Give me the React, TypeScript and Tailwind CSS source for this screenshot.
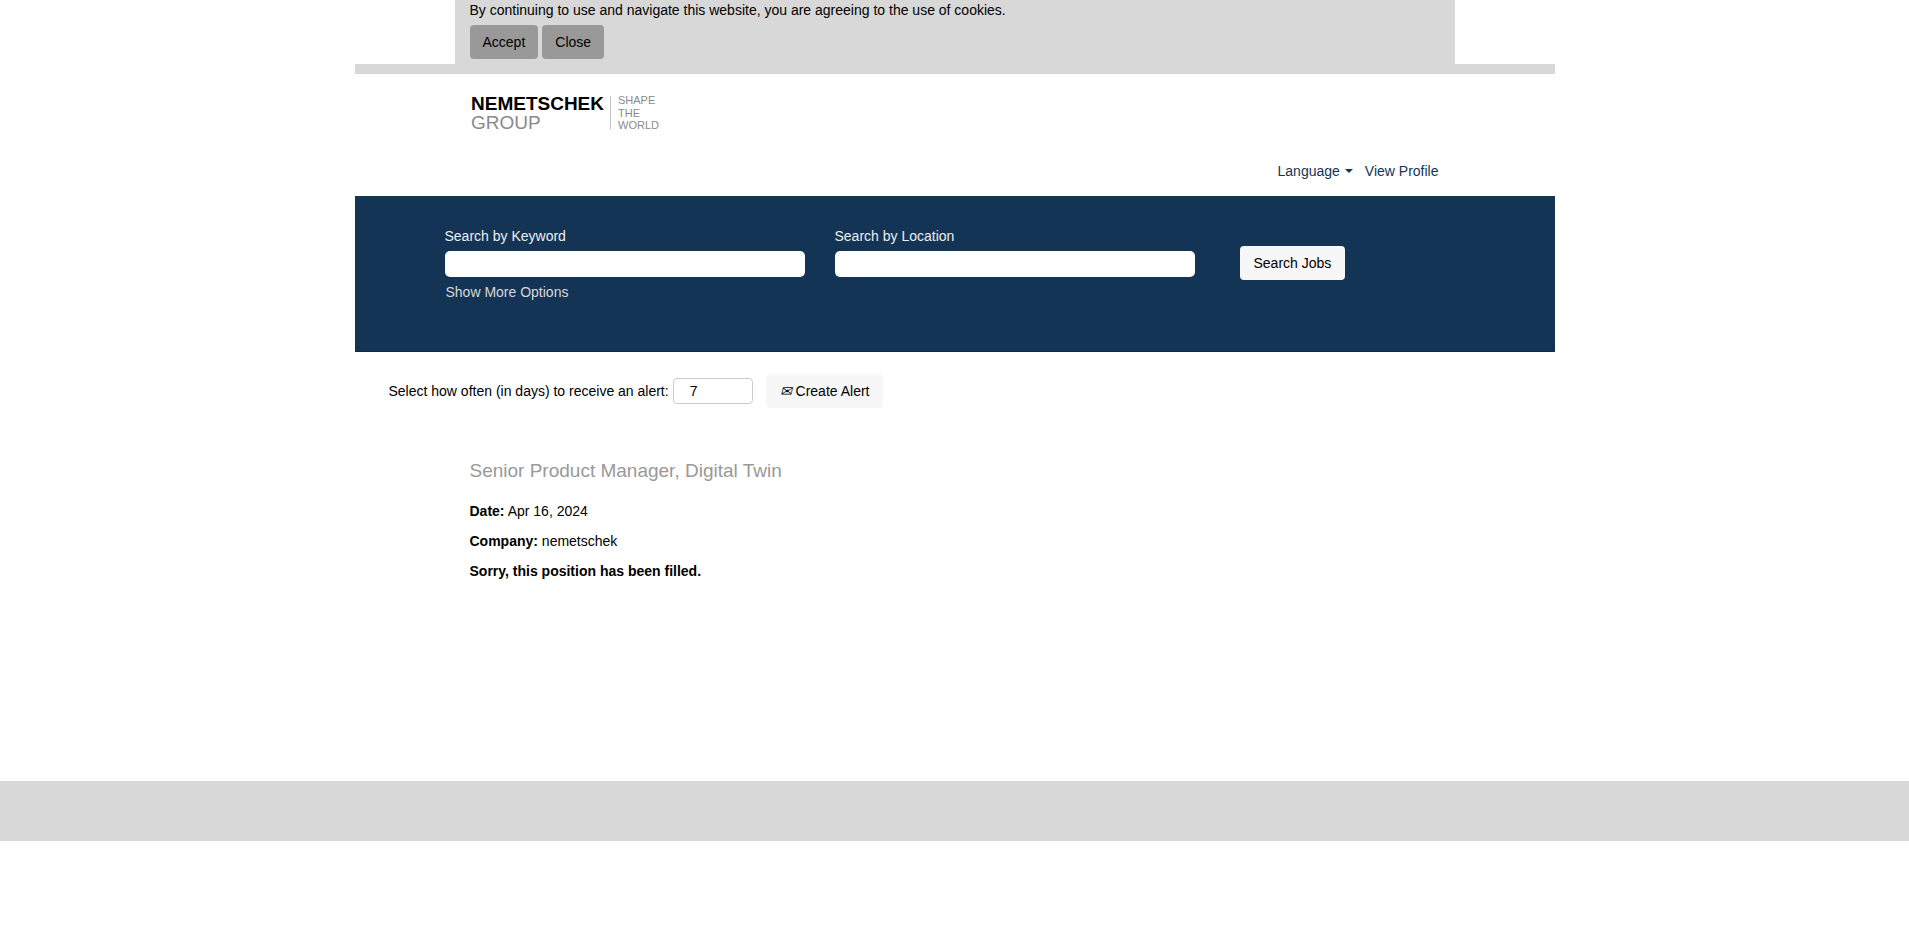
import React from "react";

function Logo() {
  return (
    <svg
      role="img"
      aria-label="Nemetschek Group, Shape the World"
      width="190"
      height="40"
      viewBox="0 0 190 40"
      fontFamily='"Liberation Sans", Arial, sans-serif'
    >
      <text x="0" y="18" fontSize="19" fontWeight="700" fill="#000000">NEMETSCHEK</text>
      <text x="0" y="37" fontSize="19" fill="#8a8a8a">GROUP</text>
      <rect x="139" y="4" width="1" height="33" fill="#c4c4c4" />
      <g fontSize="11" fill="#8a8a8a">
        <text x="147" y="12">SHAPE</text>
        <text x="147" y="25">THE</text>
        <text x="147" y="37">WORLD</text>
      </g>
    </svg>
  );
}

function CookieBanner() {
  return (
    <section aria-label="Cookie notice" className="mx-auto h-16 max-w-[1000px] bg-[#d8d8d8] px-[15px]">
      <p className="mb-[5px]">
        By continuing to use and navigate this website, you are agreeing to the use of cookies.
      </p>
      <div className="flex gap-1">
        <button type="button" className="h-[34px] rounded bg-[#999999] px-[13px]">Accept</button>
        <button type="button" className="h-[34px] rounded bg-[#999999] px-[13px]">Close</button>
      </div>
    </section>
  );
}

function Header() {
  return (
    <header className="border-t-10 border-[#d8d8d8]">
      <div className="mx-auto flex h-[122px] max-w-[1000px] flex-col justify-between px-4 pt-[18px] pb-[15px]">
        <a href="#" className="self-start"><Logo /></a>
        <nav className="flex justify-end gap-3 text-[#133454]">
          <a href="#" className="flex items-center gap-[5px]">
            Language
            <svg width="8" height="4" viewBox="0 0 8 4" fill="currentColor" aria-hidden="true">
              <path d="M0 0h8L4 4z" />
            </svg>
          </a>
          <a href="#">View Profile</a>
        </nav>
      </div>
    </header>
  );
}

function SearchField({ id, label }: { id: string; label: string }) {
  return (
    <div className="w-[360px]">
      <label htmlFor={id} className="mb-[5px] block text-[#eeeeee]">{label}</label>
      <input id={id} type="text" className="block h-[26px] w-full rounded-[5px] bg-white px-4 text-black" />
    </div>
  );
}

function SearchBar() {
  return (
    <form className="h-[156px] border-b border-[#0e2a45] bg-[#133454] pt-[30px] pl-[90px]">
      <div className="flex">
        <div className="flex gap-[30px]">
          <SearchField id="keyword" label="Search by Keyword" />
          <SearchField id="location" label="Search by Location" />
        </div>
        <button type="button" className="mt-5 ml-[45px] h-[34px] rounded bg-[#f7f7f7] px-[14px] text-black">
          Search Jobs
        </button>
      </div>
      <a href="#" className="mt-[2px] ml-px inline-block text-[#d8d8d8]">Show More Options</a>
    </form>
  );
}

function AlertForm() {
  return (
    <form className="mt-[22px] ml-[34px] flex h-[34px] items-center">
      <label htmlFor="frequency" className="mr-1">Select how often (in days) to receive an alert:</label>
      <input
        id="frequency"
        type="text"
        defaultValue="7"
        className="mr-[13px] h-[26px] w-20 rounded border border-[#cccccc] bg-white px-4"
      />
      <button type="button" className="h-[34px] rounded bg-[#f7f7f7] px-[14px]">
        <span className="italic" aria-hidden="true">✉</span> Create Alert
      </button>
    </form>
  );
}

function JobDetails() {
  return (
    <main className="mx-auto max-w-[1000px] px-[15px] pt-[50px] pb-[200px]">
      <h1 className="mb-[17px] text-[19px] leading-[26px] text-[#999999]">Senior Product Manager, Digital Twin</h1>
      <div className="flex flex-col gap-[10px]">
        <p><strong>Date:</strong> Apr 16, 2024</p>
        <p><strong>Company:</strong> nemetschek</p>
        <p><strong>Sorry, this position has been filled.</strong></p>
      </div>
    </main>
  );
}

export default function App() {
  return (
    <div className='bg-white font-["Liberation_Sans",Arial,sans-serif] text-[14px] leading-5 text-black'>
      <div className="mx-auto max-w-[1200px]">
        <CookieBanner />
        <Header />
        <SearchBar />
        <AlertForm />
        <JobDetails />
      </div>
      <footer className="h-[60px] bg-[#d8d8d8]" />
    </div>
  );
}
